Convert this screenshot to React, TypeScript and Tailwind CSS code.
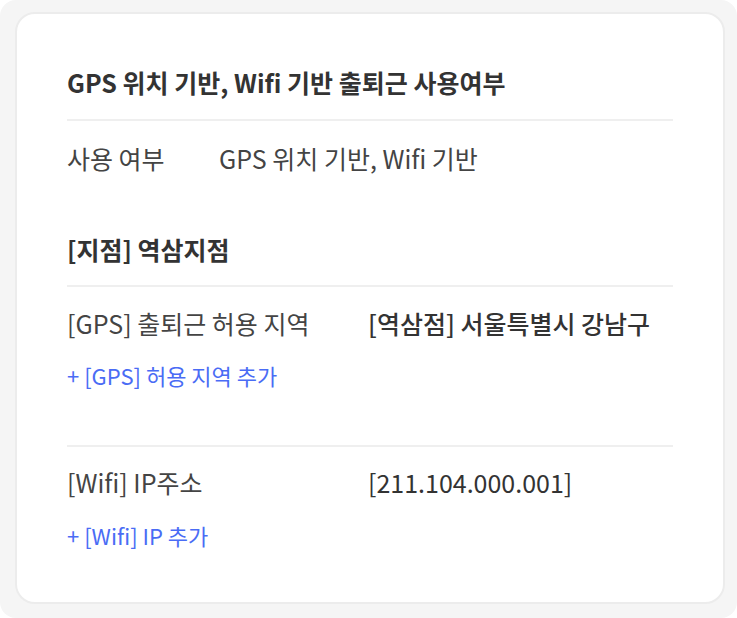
import React from "react";

const font = { fontFamily: '"Noto Sans CJK KR", "Noto Sans", sans-serif' };

export default function App() {
  return (
    <div className="w-[737px] h-[618px] bg-white" style={font}>
      <div className="w-full h-full bg-[#f5f5f5] rounded-[16px] pt-[12px] pl-[15px] pr-[12px] pb-[14px]">
        <div className="w-full h-full bg-white rounded-[20px] border-2 border-[#ececec] px-[50px]">
          <div className="pt-[50px] pb-[19px] border-b-2 border-[#efefef] text-[25px] font-bold text-[#333333] leading-[36px] whitespace-nowrap">
            GPS 위치 기반, Wifi 기반 출퇴근 사용여부
          </div>
          <div className="flex items-center pt-[19px] text-[25px] text-[#444444] leading-[36px] whitespace-nowrap">
            <span className="w-[152px]">사용 여부</span>
            <span>GPS 위치 기반, Wifi 기반</span>
          </div>
          <div className="pt-[55px] pb-[18px] border-b-2 border-[#efefef] text-[25px] font-bold text-[#333333] leading-[36px]">
            [지점] 역삼지점
          </div>
          <div className="flex items-center pt-[18px] text-[25px] leading-[36px] whitespace-nowrap">
            <span className="w-[301px] text-[#444444]">[GPS] 출퇴근 허용 지역</span>
            <span className="font-medium text-[#333333]">[역삼점] 서울특별시 강남구</span>
          </div>
          <div className="pt-[19px] pb-[55px] border-b-2 border-[#efefef] text-[22px] text-[#4a6cf5] leading-[30px]">
            + [GPS] 허용 지역 추가
          </div>
          <div className="flex items-center pt-[17px] text-[25px] leading-[36px] whitespace-nowrap">
            <span className="w-[301px] text-[#444444]">[Wifi] IP주소</span>
            <span className="text-[#333333]">[211.104.000.001]</span>
          </div>
          <div className="pt-[20px] text-[22px] text-[#4a6cf5] leading-[30px]">
            + [Wifi] IP 추가
          </div>
        </div>
      </div>
    </div>
  );
}
